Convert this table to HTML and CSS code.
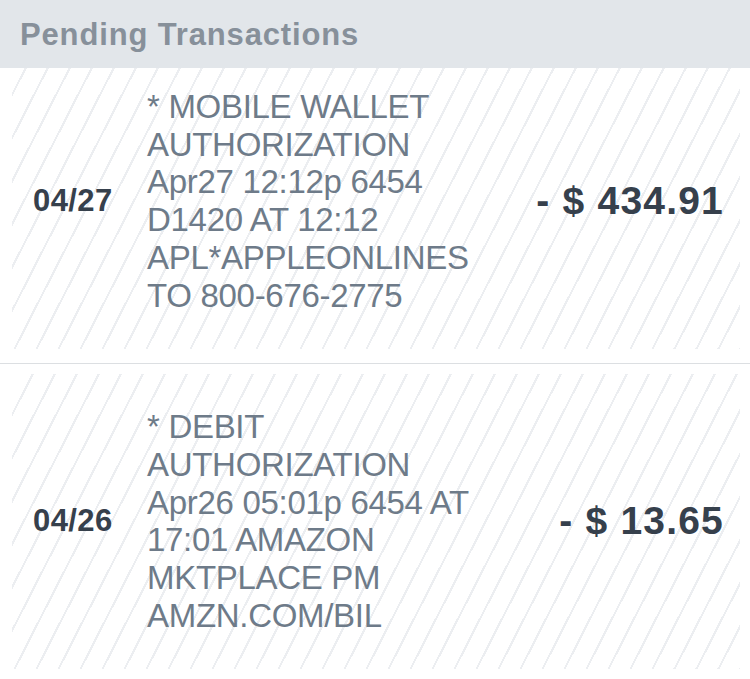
FILE: index.html
```html
<!DOCTYPE html>
<html>
<head>
<meta charset="utf-8">
<link rel="stylesheet" href="styles.css">
</head>
<body>
<div class="page">
  <header class="section-head">Pending Transactions</header>
  <div class="list">
    <div class="row">
      <div class="card">
        <div class="date">04/27</div>
        <div class="desc">* MOBILE WALLET<br>AUTHORIZATION<br>Apr27 12:12p 6454<br>D1420 AT 12:12<br>APL*APPLEONLINES<br>TO 800-676-2775</div>
        <div class="amount">- $ 434.91</div>
      </div>
    </div>
    <div class="row">
      <div class="card">
        <div class="date">04/26</div>
        <div class="desc">* DEBIT<br>AUTHORIZATION<br>Apr26 05:01p 6454 AT<br>17:01 AMAZON<br>MKTPLACE PM<br>AMZN.COM/BIL</div>
        <div class="amount">- $ 13.65</div>
      </div>
    </div>
  </div>
</div>
</body>
</html>
```
FILE: styles.css
```css
html, body {
  margin: 0;
  padding: 0;
  background: #ffffff;
  overflow: hidden;
}
.page {
  width: 750px;
  height: 679px;
  overflow: hidden;
  font-family: "Liberation Sans", Arial, sans-serif;
}
.section-head {
  position: relative;
  z-index: 2;
  height: 68px;
  box-sizing: border-box;
  padding: 17px 0 0 20px;
  background: #e2e6ea;
  color: #87909a;
  font-size: 31px;
  font-weight: bold;
  letter-spacing: 0.85px;
  line-height: 36px;
}
.list {
  margin-top: -24px;
}
.row {
  padding: 10px 10px 14px 12px;
  border-bottom: 1px solid #dcdfe2;
}
.card {
  display: flex;
  align-items: center;
  padding: 34px 16px 35px 21px;
  background: repeating-linear-gradient(117deg, #ffffff 0px, #ffffff 17.5px, #eceef1 17.5px, #eceef1 19.6px);
}
.date {
  width: 114px;
  flex: none;
  color: #36404c;
  font-size: 31px;
  font-weight: bold;
  letter-spacing: 0.4px;
}
.desc {
  flex: none;
  color: #6e7b89;
  font-size: 33px;
  line-height: 37.7px;
  letter-spacing: -0.3px;
}
.amount {
  flex: 1;
  text-align: right;
  color: #36404c;
  font-size: 39px;
  font-weight: bold;
  letter-spacing: 1.2px;
}
```
